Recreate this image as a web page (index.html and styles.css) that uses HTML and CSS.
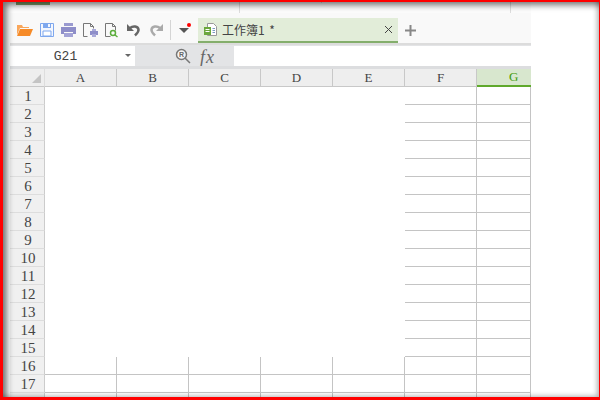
FILE: index.html
```html
<!DOCTYPE html>
<html lang="zh">
<head>
<meta charset="utf-8">
<title>工作簿1</title>
<link rel="stylesheet" href="styles.css">
</head>
<body>
<div class="screen">
  <div class="app">
    <div class="ribbon-edge">
      <span class="ribbon-tab"></span>
      <span class="ribbon-rule first"></span>
      <span class="ribbon-rule second"></span>
      <span class="ribbon-rule third"></span>
    </div>
    <div class="toolbar">
      <div class="quick">
        <svg width="18" height="16" viewBox="0 0 18 16"><path d="M1 3h5l1 2h6v1H4L1 13z" fill="#f9a65a"/><path d="M4 7h13l-3 7H1z" fill="#f68b28"/></svg>
        <svg width="16" height="16" viewBox="0 0 16 16"><path d="M1.500 1.500h13v13h-13z" fill="#f4f7fe" stroke="#7fa8ee"/><path d="M4 1h8v5H4z" fill="#7fa8ee"/><path d="M9 2h2v3H9z" fill="#f4f7fe"/><path d="M4 9h8v5H4z" fill="#fff" stroke="#7fa8ee"/></svg>
        <svg width="17" height="16" viewBox="0 0 17 16"><path d="M4 1h9v3H4z" fill="#9a9ad0"/><path d="M1 5h15v7h-3v-2H4v2H1z" fill="#8e8ec9"/><path d="M4 11h9v4H4z" fill="#a3a3d6"/></svg>
        <svg width="17" height="16" viewBox="0 0 17 16"><path d="M1.500 14.500V1.500h7l3 3v2M1.500 14.500h4" fill="none" stroke="#777"/><path d="M8.500 1.500v3h3" fill="none" stroke="#777"/><path d="M8 9h8v4H8z" fill="#8e8ec9"/><path d="M10 7h4v2h-4zM10 12h4v3h-4z" fill="#a9a9d9"/></svg>
        <svg width="17" height="16" viewBox="0 0 17 16"><path d="M1.500 14.500V1.500h7l3 3v4M1.500 14.500h5" fill="none" stroke="#777"/><path d="M8.500 1.500v3h3" fill="none" stroke="#777"/><circle cx="9" cy="11" r="2.500" fill="none" stroke="#5cad3c" stroke-width="1.500"/><path d="M11 13l2.500 2" stroke="#5cad3c" stroke-width="1.500"/></svg>
        <svg width="18" height="14" viewBox="0 0 18 14"><path d="M1 1v7h7z" fill="#666"/><path d="M4 5c3-2.500 8-2 8.500 1.500.3 2.500-1.500 4-3.500 6" fill="none" stroke="#666" stroke-width="2.500"/></svg>
        <svg width="15" height="14" viewBox="0 0 15 14"><path d="M14 1v7H7z" fill="#aaa"/><path d="M11 5C8 2.500 3 3 2.500 6.500c-.3 2.500 1.500 4 3.500 6" fill="none" stroke="#aaa" stroke-width="2.500"/></svg>
      </div>
      <span class="divider"></span>
      <div class="more">
        <svg width="10" height="5" viewBox="0 0 10 5"><path d="M0 0h10L5 5z" fill="#555"/></svg>
        <span class="dot"></span>
      </div>
      <div class="tab">
        <svg class="tab-ico" width="15" height="15" viewBox="0 0 15 15"><path d="M4.500 1.500h6l3 3v9h-9z" fill="#fff" stroke="#999"/><path d="M1 5h7v8H1z" fill="#6aa83c"/><path d="M2.500 7h4v1h-4zM2.500 9h4v1h-4z" fill="#fff"/><path d="M9.500 6.500h2.500M9.500 8.500h2.500M9.500 10.500h2.500" stroke="#7a9cc0"/></svg>
        <span class="tab-name">工作簿1 *</span>
        <svg width="9" height="9" viewBox="0 0 9 9"><path d="M1 1l7 7M8 1L1 8" stroke="#444"/></svg>
      </div>
      <svg class="plus" width="13" height="13" viewBox="0 0 13 13"><path d="M6.500 1v11M1 6.500h11" stroke="#888" stroke-width="2"/></svg>
    </div>
    <div class="formula-bar">
      <div class="name-box"><span class="name-text">G21</span><span class="caret"></span></div>
      <div class="fx-group">
        <svg width="16" height="16" viewBox="0 0 16 16"><circle cx="6.500" cy="6.500" r="5" fill="#f4f4f4" stroke="#777" stroke-width="1.500"/><path d="M10 10l5 5" stroke="#777" stroke-width="1.500"/><text x="4" y="9" class="r-mark">R</text></svg>
        <span class="fx">fx</span>
      </div>
      <div class="formula-input"></div>
    </div>
    <div class="sheet">
      <div class="corner"><span class="corner-mark"></span></div>
      <div class="col-head">A</div>
      <div class="col-head">B</div>
      <div class="col-head">C</div>
      <div class="col-head">D</div>
      <div class="col-head">E</div>
      <div class="col-head">F</div>
      <div class="col-head active">G</div>

      <div class="row-head">1</div><div class="row-head">2</div><div class="row-head">3</div><div class="row-head">4</div><div class="row-head">5</div><div class="row-head">6</div><div class="row-head">7</div><div class="row-head">8</div><div class="row-head">9</div><div class="row-head">10</div><div class="row-head">11</div><div class="row-head">12</div><div class="row-head">13</div><div class="row-head">14</div><div class="row-head">15</div><div class="row-head">16</div><div class="row-head">17</div><div class="row-head"></div>

      <div class="merged"></div>
      <div class="cell"></div><div class="cell"></div><div class="cell"></div><div class="cell"></div><div class="cell"></div><div class="cell"></div><div class="cell"></div><div class="cell"></div><div class="cell"></div><div class="cell"></div><div class="cell"></div><div class="cell"></div><div class="cell"></div><div class="cell"></div><div class="cell"></div><div class="cell"></div><div class="cell"></div><div class="cell"></div><div class="cell"></div><div class="cell"></div><div class="cell"></div><div class="cell"></div><div class="cell"></div><div class="cell"></div><div class="cell"></div><div class="cell"></div><div class="cell"></div><div class="cell"></div><div class="cell"></div><div class="cell"></div>
      <div class="cell"></div><div class="cell"></div><div class="cell"></div><div class="cell"></div><div class="cell"></div><div class="cell"></div><div class="cell"></div>
      <div class="cell"></div><div class="cell"></div><div class="cell"></div><div class="cell"></div><div class="cell"></div><div class="cell"></div><div class="cell"></div>
      <div class="cell"></div><div class="cell"></div><div class="cell"></div><div class="cell"></div><div class="cell"></div><div class="cell"></div><div class="cell"></div>
    </div>
  </div>
  <div class="frame"></div>
</div>
</body>
</html>
```
FILE: styles.css
```css
* { box-sizing: border-box; }
html, body { margin: 0; padding: 0; background: #fff; }
.screen { position: relative; width: 600px; height: 400px; overflow: hidden; background: #fff; }
.app { width: 521px; height: 400px; margin-left: 10px; overflow: hidden; display: flex; flex-direction: column; background: #fff; }

.ribbon-edge { height: 13px; flex: none; background: #fcfcfc; display: flex; }
.ribbon-tab { width: 34px; height: 5px; margin-left: 6px; background: #7f9f68; }
.ribbon-rule { width: 1px; height: 13px; background: #ddd; }
.ribbon-rule.first { margin-left: 189px; }
.ribbon-rule.second { margin-left: 81px; height: 3px; }
.ribbon-rule.third { margin-left: 188px; }

.toolbar { height: 30px; flex: none; background: #f9f9f9; display: flex; align-items: center; padding-left: 6px; }
.quick { display: flex; align-items: center; gap: 5px; margin-top: 4px; }
.divider { width: 1px; height: 20px; background: #d5d5d5; margin: 4px 0 0 6px; }
.more { position: relative; width: 25px; height: 16px; display: flex; align-items: center; justify-content: center; margin-top: 4px; }
.dot { position: absolute; right: 5px; top: 1px; width: 4px; height: 4px; border-radius: 50%; background: #f00; }
.tab { width: 200px; height: 25px; margin-left: 2px; align-self: flex-end; background: #e2edd9; border-bottom: 2px solid #84ae6c; display: flex; align-items: center; padding: 0 5px 0 5px; }
.tab-ico { flex: none; }
.tab-name { margin-left: 4px; flex: 1; font: 12px "Noto Sans CJK SC", "Liberation Sans", sans-serif; word-spacing: 2px; color: #444; }
.plus { margin-left: 6px; margin-top: 4px; }

.formula-bar { height: 23px; flex: none; background: #e3e4e6; border-top: 2px solid #dcdcdc; display: flex; align-items: stretch; padding-top: 1px; }
.name-box { width: 125px; background: #fff; display: flex; align-items: center; position: relative; }
.name-text { width: 111px; text-align: center; font: 13px "Liberation Mono", monospace; color: #444; }
.caret { position: absolute; right: 4px; top: 8px; border-style: solid; border-width: 3px 3px 0; border-color: #666 transparent transparent; }
.fx-group { width: 99px; display: flex; align-items: center; padding-left: 40px; gap: 9px; }
.fx { font: italic 18px "Liberation Serif", serif; letter-spacing: 1px; color: #666; padding-top: 2px; }
.r-mark { font: bold 7px "Liberation Sans", sans-serif; fill: #666; }
.formula-input { flex: 1; background: #fff; }

.sheet { flex: none; display: grid; grid-template-columns: 35px repeat(6, 72px) 54px; grid-template-rows: repeat(19, 18px); grid-auto-flow: dense; background: #fff; border-top: 3px solid #dcdddf; }
.corner { background: #eee; position: relative; border-bottom: 1px solid #c8c8c8; border-right: 1px solid #ddd; }
.corner-mark { position: absolute; right: 3px; bottom: 3px; width: 0; height: 0; border-style: solid; border-width: 0 0 9px 9px; border-color: transparent transparent #c4c4c4 transparent; }
.col-head { background: #eee; border-right: 1px solid #c8c8c8; border-bottom: 1px solid #c8c8c8; display: flex; align-items: center; justify-content: center; font: 13px "Liberation Serif", serif; color: #444; }
.col-head.active { background: #d8e7ce; color: #3f9a0a; border-right: 0; border-bottom: 2px solid #5fa92b; justify-content: flex-start; padding-left: 32px; }
.row-head { grid-column: 1; background: #f0f0f0; border-right: 1px solid #ccc; border-bottom: 1px solid #ddd; display: flex; align-items: center; justify-content: center; padding: 2px 0 0 2px; font: 15px "Liberation Serif", serif; color: #444; }
.merged { grid-column: 2 / 7; grid-row: 2 / 17; background: #fff; }
.cell { border-right: 1px solid #c4c4c4; border-bottom: 1px solid #c4c4c4; }

.frame { position: absolute; inset: 0; border-style: solid; border-color: #f00; border-width: 2px 1px 3px 3px; box-shadow: inset 7px 6px 6px -3px rgba(0,0,0,.55), inset -5px -4px 5px -3px rgba(0,0,0,.3); pointer-events: none; }
```
